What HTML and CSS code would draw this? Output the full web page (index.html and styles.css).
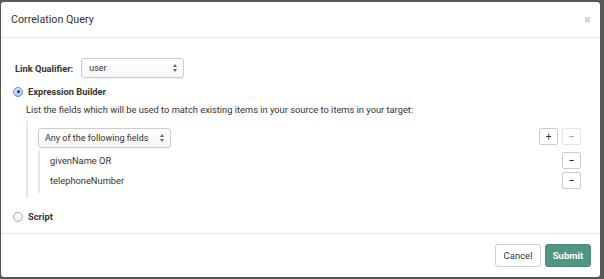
FILE: index.html
```html
<!DOCTYPE html>
<html>
<head>
<meta charset="utf-8">
<link rel="stylesheet" href="styles.css">
</head>
<body>
<div class="modal">
  <div class="modal-header">
    <div class="modal-title">Correlation Query</div>
    <span class="close">&times;</span>
  </div>
  <div class="modal-body">
    <div class="qualifier-row">
      <label class="label">Link Qualifier:</label>
      <div class="select qualifier-select"><span>user</span><span class="arrows"></span></div>
    </div>
    <div class="radio-row">
      <span class="radio checked"></span><span class="radio-label">Expression Builder</span>
    </div>
    <div class="help">List the fields which will be used to match existing items in your source to items in your target:</div>
    <div class="expr">
      <div class="group-row">
        <div class="select group-select"><span>Any of the following fields</span><span class="arrows"></span></div>
        <div class="btns">
          <span class="btn-sm plus">+</span><span class="btn-sm disabled">&minus;</span>
        </div>
      </div>
      <div class="fields">
        <div class="field-row"><span>givenName OR</span><span class="btn-sm">&minus;</span></div>
        <div class="field-row"><span>telephoneNumber</span><span class="btn-sm">&minus;</span></div>
      </div>
    </div>
    <div class="radio-row script-row">
      <span class="radio"></span><span class="radio-label">Script</span>
    </div>
  </div>
  <div class="modal-footer">
    <button class="btn btn-default">Cancel</button>
    <button class="btn btn-primary">Submit</button>
  </div>
</div>
</body>
</html>
```

FILE: styles.css
```css
html, body {
  margin: 0;
  padding: 0;
}
body {
  background: #575757;
  width: 604px;
  height: 279px;
  overflow: hidden;
  font-family: Roboto, "Liberation Sans", sans-serif;
  color: #333;
  font-size: 9.3px;
  padding: 2px 0 0 1px;
  box-sizing: border-box;
}
.modal {
  width: 599px;
  height: 275px;
  background: #fff;
  border-radius: 3px;
  display: flex;
  flex-direction: column;
}
.modal-header {
  height: 35px;
  border-bottom: 1px solid #e5e5e5;
  display: flex;
  align-items: center;
  justify-content: space-between;
  padding: 0 9px 0 10px;
}
.modal-title {
  font-size: 10.7px;
  color: #333;
}
.close {
  color: #c8c8c8;
  font-size: 13px;
  font-weight: bold;
}
.modal-body {
  flex: 1;
  padding: 20px 19px 0 11px;
}
.qualifier-row {
  display: flex;
  align-items: center;
  padding-left: 3px;
}
.label {
  font-weight: bold;
  margin-right: 8px;
}
.select {
  box-sizing: border-box;
  height: 20px;
  border: 1px solid #ccc;
  border-radius: 3px;
  display: flex;
  align-items: center;
  justify-content: space-between;
  padding: 0 5px 0 7px;
  background: linear-gradient(#fff, #f7f7f7);
  box-shadow: 0 1px 1px rgba(0,0,0,0.05);
}
.qualifier-select {
  width: 103px;
  font-size: 9px;
}
.arrows {
  width: 5px;
  height: 8px;
  position: relative;
}
.arrows::before, .arrows::after {
  content: "";
  position: absolute;
  left: 0;
  border-left: 2.5px solid transparent;
  border-right: 2.5px solid transparent;
}
.arrows::before {
  top: 0;
  border-bottom: 3px solid #666;
}
.arrows::after {
  bottom: 0;
  border-top: 3px solid #666;
}
.radio-row {
  display: flex;
  align-items: center;
  margin-top: 5px;
  height: 17px;
}
.radio {
  box-sizing: border-box;
  width: 10px;
  height: 10px;
  border-radius: 50%;
  border: 1px solid #aaa;
  background: linear-gradient(#fff, #eee);
  margin: 0 5px 0 1px;
  position: relative;
}
.radio.checked {
  border-color: #5a8fd6;
  background: linear-gradient(#d8e8fb, #a9c9f3);
}
.radio.checked::after {
  content: "";
  position: absolute;
  left: 2.5px;
  top: 2.5px;
  width: 3px;
  height: 3px;
  border-radius: 50%;
  background: #1c3b6b;
}
.radio-label {
  font-weight: bold;
}
.help {
  margin: 4px 0 0 14px;
}
.expr {
  margin: 6px 0 0 14px;
  border-left: 2px solid #e6e6e6;
  padding: 7px 0 5px 10px;
}
.group-row {
  display: flex;
  justify-content: space-between;
  align-items: flex-start;
}
.group-select {
  width: 133px;
  font-size: 9px;
  height: 20px;
  padding-left: 6px;
}
.btns {
  display: flex;
  gap: 4px;
}
.btn-sm {
  box-sizing: border-box;
  width: 19px;
  height: 17px;
  border: 1px solid #ccc;
  border-radius: 2px;
  display: flex;
  align-items: center;
  justify-content: center;
  font-size: 10px;
  font-weight: bold;
  color: #333;
  background: #fff;
}
.btn-sm.plus {
  font-weight: normal;
}
.btn-sm.disabled {
  color: #aaa;
  border-color: #e4e4e4;
}
.fields {
  margin: 3px 0 0 0;
  border-left: 2px solid #e6e6e6;
  padding: 1px 0 1px 0;
}
.field-row {
  display: flex;
  justify-content: space-between;
  align-items: center;
  height: 17px;
  padding-left: 10px;
  margin-bottom: 3px;
}
.field-row:last-child {
  margin-top: 1px;
}
.script-row {
  margin-top: 10px;
}
.modal-footer {
  height: 43px;
  border-top: 1px solid #e5e5e5;
  display: flex;
  justify-content: flex-end;
  align-items: center;
  gap: 4px;
  padding-right: 9px;
}
.btn {
  font-family: Roboto, "Liberation Sans", sans-serif;
  font-size: 9.5px;
  height: 23px;
  width: 46px;
  padding: 0;
  border-radius: 3px;
  border: 1px solid #ccc;
}
.btn-default {
  background: #fff;
  color: #333;
}
.btn-primary {
  background: #519583;
  border-color: #4a8a79;
  color: #fff;
  font-weight: bold;
}
```
